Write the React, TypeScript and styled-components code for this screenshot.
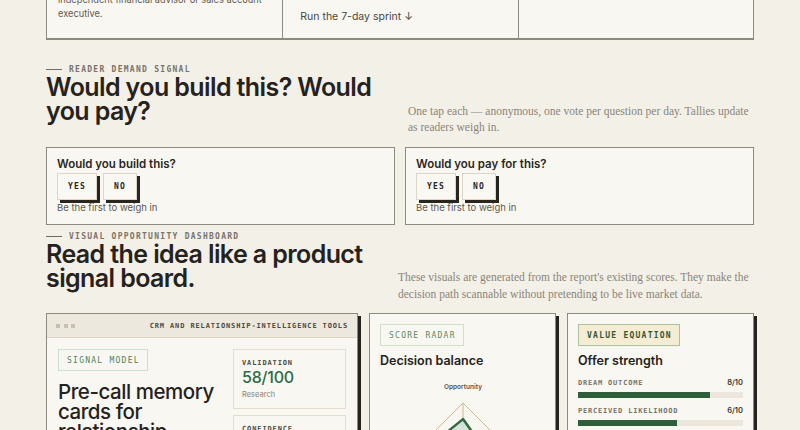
import React from 'react';
import styled, { createGlobalStyle } from 'styled-components';

const GlobalStyle = createGlobalStyle`
  html, body {
    margin: 0;
    padding: 0;
    background: #f3f0e8;
  }
  body {
    overflow: hidden;
    font-family: Inter, "Liberation Sans", sans-serif;
    color: #25221d;
  }
  * {
    box-sizing: border-box;
  }
`;

const Page = styled.div`
  width: 708px;
  margin: 0 auto;
`;

// the page is shown scrolled: only the foot of the proof strip is in view
const ScrollClip = styled.div`
  height: 40px;
  overflow: hidden;
  display: flex;
  flex-direction: column;
  justify-content: flex-end;
`;

const ProofGrid = styled.div`
  flex: 0 0 auto;
  display: grid;
  grid-template-columns: repeat(3, 1fr);
  background: #f9f7f2;
  border: 1px solid #8d8a81;
  border-bottom-width: 2px;
`;

interface ProofCellProps {
  $pl: number;
  $pb: number;
  $end?: boolean;
}

const ProofCell = styled.div<ProofCellProps>`
  display: flex;
  flex-direction: column;
  justify-content: ${({ $end }) => ($end ? 'flex-end' : 'flex-start')};
  padding: 12px 12px ${({ $pb }) => $pb}px ${({ $pl }) => $pl}px;
  & + & {
    border-left: 1px solid #8d8a81;
  }
`;

const ProofLabel = styled.div`
  font: 700 7px/10px "DejaVu Sans Mono", monospace;
  letter-spacing: 0.9px;
  color: #78746a;
  margin-bottom: 6px;
`;

const ProofText = styled.p`
  margin: 0;
  font-size: 9.25px;
  line-height: 14px;
  color: #5d594f;
`;

const ProofLink = styled.div`
  margin-top: 8px;
  font-size: 10.5px;
  line-height: 14px;
  color: #4b473f;
`;

const Section = styled.section<{ $top: number }>`
  margin-top: ${({ $top }) => $top}px;
`;

const Eyebrow = styled.div`
  display: flex;
  align-items: center;
  gap: 7px;
  font: 700 8px/11px "DejaVu Sans Mono", monospace;
  letter-spacing: 1.27px;
  color: #78746a;
  &::before {
    content: "";
    width: 16px;
    height: 1px;
    background: #6f6b61;
  }
`;

const HeadRow = styled.div<{ $noteWidth: number }>`
  display: grid;
  grid-template-columns: 1fr ${({ $noteWidth }) => $noteWidth}px;
  gap: 16px;
  align-items: end;
`;

const Heading = styled.h2`
  margin: 0 0 12px;
  font-size: 25px;
  line-height: 24px;
  font-weight: 600;
  letter-spacing: -0.6px;
  color: #25221d;
`;

const Note = styled.p<{ $lh: number }>`
  margin: 0;
  font-family: "Liberation Serif", serif;
  font-size: 11.5px;
  line-height: ${({ $lh }) => $lh}px;
  color: #8a8578;
`;

const VoteGrid = styled.div`
  display: grid;
  grid-template-columns: 1fr 1fr;
  gap: 10px;
  margin-top: 12px;
`;

const VoteCard = styled.div`
  background: #f9f7f2;
  border: 1px solid #8d8a81;
  padding: 9px 10px;
`;

const VoteQuestion = styled.div`
  font-size: 11.5px;
  line-height: 14px;
  font-weight: 600;
  color: #2a2722;
`;

const VoteRow = styled.div`
  display: flex;
  gap: 6px;
  margin-top: 2px;
`;

const VoteButton = styled.button`
  height: 27px;
  padding: 0 10px;
  background: #faf8f3;
  border: 1px solid #ddd6c7;
  box-shadow: 3px 3px 0 #28251f;
  font: 700 8px/1 "DejaVu Sans Mono", monospace;
  letter-spacing: 1.2px;
  color: #2a2722;
  cursor: pointer;
`;

const VoteHint = styled.div`
  margin-top: 1px;
  font-size: 9.5px;
  line-height: 14px;
  color: #5d594f;
`;

const Board = styled.div`
  display: grid;
  grid-template-columns: 312px 1fr 1fr;
  gap: 11px;
  align-items: start;
  margin-top: 11px;
`;

const Panel = styled.div`
  background: #f9f7f2;
  border: 1px solid #8d8a81;
  box-shadow: 3px 3px 0 #26231e;
  min-height: 220px;
`;

const PanelBar = styled.div`
  height: 24px;
  display: flex;
  align-items: center;
  justify-content: space-between;
  padding: 0 9px;
  background: #ece8dd;
  border-bottom: 1px solid #dcd5c6;
`;

const Dots = styled.div`
  display: flex;
  gap: 3.5px;
`;

const Dot = styled.span`
  width: 4px;
  height: 4px;
  background: #c7c0af;
`;

const PanelBarTitle = styled.div`
  font: 700 7px/10px "DejaVu Sans Mono", monospace;
  letter-spacing: 0.87px;
  color: #4e4a42;
`;

const SignalBody = styled.div`
  display: grid;
  grid-template-columns: 1fr 113px;
  gap: 12px;
  padding: 11px;
`;

const SignalMain = styled.div`
  display: flex;
  flex-direction: column;
  align-items: flex-start;
`;

const PanelBody = styled.div`
  padding: 10px;
  display: flex;
  flex-direction: column;
  align-items: flex-start;
`;

type Tone = 'mint' | 'sage' | 'cream';

const toneStyles: Record<Tone, string> = {
  mint: 'border-color: #cde0d1; color: #4f8060; background: transparent; font-weight: 400;',
  sage: 'border-color: #d3dfca; color: #5b8a62; background: transparent; font-weight: 400;',
  cream: 'border-color: #a9c3a1; color: #2f5a38; background: #f6ebd3; font-weight: 700;',
};

const Badge = styled.div<{ $tone: Tone }>`
  display: inline-flex;
  align-items: center;
  height: 22px;
  padding: 0 7px 0 8px;
  border: 1px solid;
  font-family: "DejaVu Sans Mono", monospace;
  font-size: 8px;
  letter-spacing: 1.25px;
  ${({ $tone }) => toneStyles[$tone]}
`;

const CardTitle = styled.h3`
  margin: 11px 0 0;
  font-size: 20.5px;
  line-height: 20px;
  font-weight: 500;
  letter-spacing: -0.45px;
  color: #25221d;
`;

const StatBox = styled.div`
  border: 1px solid #e4ddcd;
  padding: 8px;
  & + & {
    margin-top: 6px;
  }
`;

const StatLabel = styled.div`
  font: 700 7px/10px "DejaVu Sans Mono", monospace;
  letter-spacing: 0.88px;
  color: #4e4a42;
`;

const StatValue = styled.div`
  font-size: 16px;
  line-height: 18px;
  font-weight: 500;
  letter-spacing: -0.2px;
  color: #2f6b3e;
`;

const StatNote = styled.div`
  margin-top: 4px;
  font-size: 7.5px;
  line-height: 10px;
  color: #8a8578;
`;

const PanelTitle = styled.h3`
  margin: 7px 0 0;
  font-size: 12.5px;
  line-height: 16px;
  font-weight: 600;
  color: #25221d;
`;

const RadarSvg = styled.svg`
  display: block;
  align-self: center;
  margin-top: 4px;
`;

const BarList = styled.div`
  align-self: stretch;
  margin-top: 9px;
`;

const BarItem = styled.div`
  & + & {
    margin-top: 8px;
  }
`;

const BarHead = styled.div`
  display: flex;
  justify-content: space-between;
`;

const BarLabel = styled.span`
  font: 700 7px/10px "DejaVu Sans Mono", monospace;
  letter-spacing: 0.8px;
  color: #78746a;
`;

const BarValue = styled.span`
  font-size: 7.5px;
  line-height: 10px;
  font-weight: 600;
  color: #3a362f;
`;

const BarTrack = styled.div`
  margin-top: 4px;
  height: 6px;
  background: #ebe7dc;
`;

const BarFill = styled.div<{ $pct: number }>`
  width: ${({ $pct }) => $pct}%;
  height: 100%;
  background: #2f5f3a;
`;

const radarAxes = [
  { label: 'Opportunity', value: 0.77 },
  { label: 'Urgency', value: 0.55 },
  { label: 'Feasibility', value: 0.6 },
  { label: 'Demand', value: 0.95 },
];

const Radar = () => {
  const cx = 82;
  const cy = 100;
  const r = 70;
  const point = (i: number, k: number) => {
    const a = -Math.PI / 2 + (i * Math.PI * 2) / radarAxes.length;
    return [cx + Math.cos(a) * r * k, cy + Math.sin(a) * r * k];
  };
  const ring = (k: number) => radarAxes.map((_, i) => point(i, k).join(',')).join(' ');
  const shape = radarAxes.map((a, i) => point(i, a.value).join(',')).join(' ');
  return (
    <RadarSvg width={164} height={190} viewBox="0 0 164 190">
      <polygon points={ring(1)} fill="none" stroke="#cbb891" strokeWidth={1} />
      <polygon points={ring(0.5)} fill="none" stroke="#ddd0b2" strokeWidth={1} />
      {radarAxes.map((_, i) => {
        const [x, y] = point(i, 1);
        return <line key={i} x1={cx} y1={cy} x2={x} y2={y} stroke="#cbb891" strokeWidth={1} />;
      })}
      <polygon points={shape} fill="#cfdfd5" fillOpacity={0.85} stroke="#2f6b3e" strokeWidth={2.5} strokeLinejoin="round" />
      <text
        x={cx}
        y={14}
        textAnchor="middle"
        dominantBaseline="middle"
        fontFamily="Inter, sans-serif"
        fontSize={6.5}
        fontWeight={600}
        fill="#5a564e"
      >
        {radarAxes[0].label}
      </text>
    </RadarSvg>
  );
};

const offerBars = [
  { label: 'DREAM OUTCOME', score: 8 },
  { label: 'PERCEIVED LIKELIHOOD', score: 6 },
  { label: 'TIME DELAY', score: 5 },
];

const votes = ['Would you build this?', 'Would you pay for this?'];

const App = () => (
  <>
    <GlobalStyle />
    <Page>
      <ScrollClip>
        <ProofGrid>
          <ProofCell $pl={11} $pb={17} $end>
            <ProofLabel>FIRST BUYER</ProofLabel>
            <ProofText>
              Start with one persona who lives on remembered details: a solo, relationship-driven
              professional such as an
              <br />
              independent financial advisor or sales account executive.
            </ProofText>
          </ProofCell>
          <ProofCell $pl={17} $pb={14} $end>
            <ProofLabel>NEXT STEP</ProofLabel>
            <ProofText>Interview ten of them before writing a line of code.</ProofText>
            <ProofLink>Run the 7-day sprint ↓</ProofLink>
          </ProofCell>
          <ProofCell $pl={17} $pb={14}>
            <ProofLabel>WATCH OUT</ProofLabel>
            <ProofText>CRM incumbents can copy the feature.</ProofText>
          </ProofCell>
        </ProofGrid>
      </ScrollClip>

      <Section $top={24}>
        <Eyebrow>READER DEMAND SIGNAL</Eyebrow>
        <HeadRow $noteWidth={346}>
          <Heading>Would you build this? Would you pay?</Heading>
          <Note $lh={16}>
            One tap each — anonymous, one vote per question per day. Tallies update as readers
            weigh in.
          </Note>
        </HeadRow>
        <VoteGrid>
          {votes.map((q) => (
            <VoteCard key={q}>
              <VoteQuestion>{q}</VoteQuestion>
              <VoteRow>
                <VoteButton>YES</VoteButton>
                <VoteButton>NO</VoteButton>
              </VoteRow>
              <VoteHint>Be the first to weigh in</VoteHint>
            </VoteCard>
          ))}
        </VoteGrid>
      </Section>

      <Section $top={6}>
        <Eyebrow>VISUAL OPPORTUNITY DASHBOARD</Eyebrow>
        <HeadRow $noteWidth={356}>
          <Heading>Read the idea like a product signal board.</Heading>
          <Note $lh={16.5}>
            These visuals are generated from the report's existing scores. They make the decision
            path scannable without pretending to be live market data.
          </Note>
        </HeadRow>
        <Board>
          <Panel>
            <PanelBar>
              <Dots>
                <Dot />
                <Dot />
                <Dot />
              </Dots>
              <PanelBarTitle>CRM AND RELATIONSHIP-INTELLIGENCE TOOLS</PanelBarTitle>
            </PanelBar>
            <SignalBody>
              <SignalMain>
                <Badge $tone="mint">SIGNAL MODEL</Badge>
                <CardTitle>Pre-call memory cards for relationship managers</CardTitle>
              </SignalMain>
              <div>
                <StatBox>
                  <StatLabel>VALIDATION</StatLabel>
                  <StatValue>58/100</StatValue>
                  <StatNote>Research</StatNote>
                </StatBox>
                <StatBox>
                  <StatLabel>CONFIDENCE</StatLabel>
                  <StatValue>Medium</StatValue>
                  <StatNote>Signals</StatNote>
                </StatBox>
              </div>
            </SignalBody>
          </Panel>

          <Panel>
            <PanelBody>
              <Badge $tone="sage">SCORE RADAR</Badge>
              <PanelTitle>Decision balance</PanelTitle>
              <Radar />
            </PanelBody>
          </Panel>

          <Panel>
            <PanelBody>
              <Badge $tone="cream">VALUE EQUATION</Badge>
              <PanelTitle>Offer strength</PanelTitle>
              <BarList>
                {offerBars.map((b) => (
                  <BarItem key={b.label}>
                    <BarHead>
                      <BarLabel>{b.label}</BarLabel>
                      <BarValue>{b.score}/10</BarValue>
                    </BarHead>
                    <BarTrack>
                      <BarFill $pct={b.score * 10} />
                    </BarTrack>
                  </BarItem>
                ))}
              </BarList>
            </PanelBody>
          </Panel>
        </Board>
      </Section>
    </Page>
  </>
);

export default App;
